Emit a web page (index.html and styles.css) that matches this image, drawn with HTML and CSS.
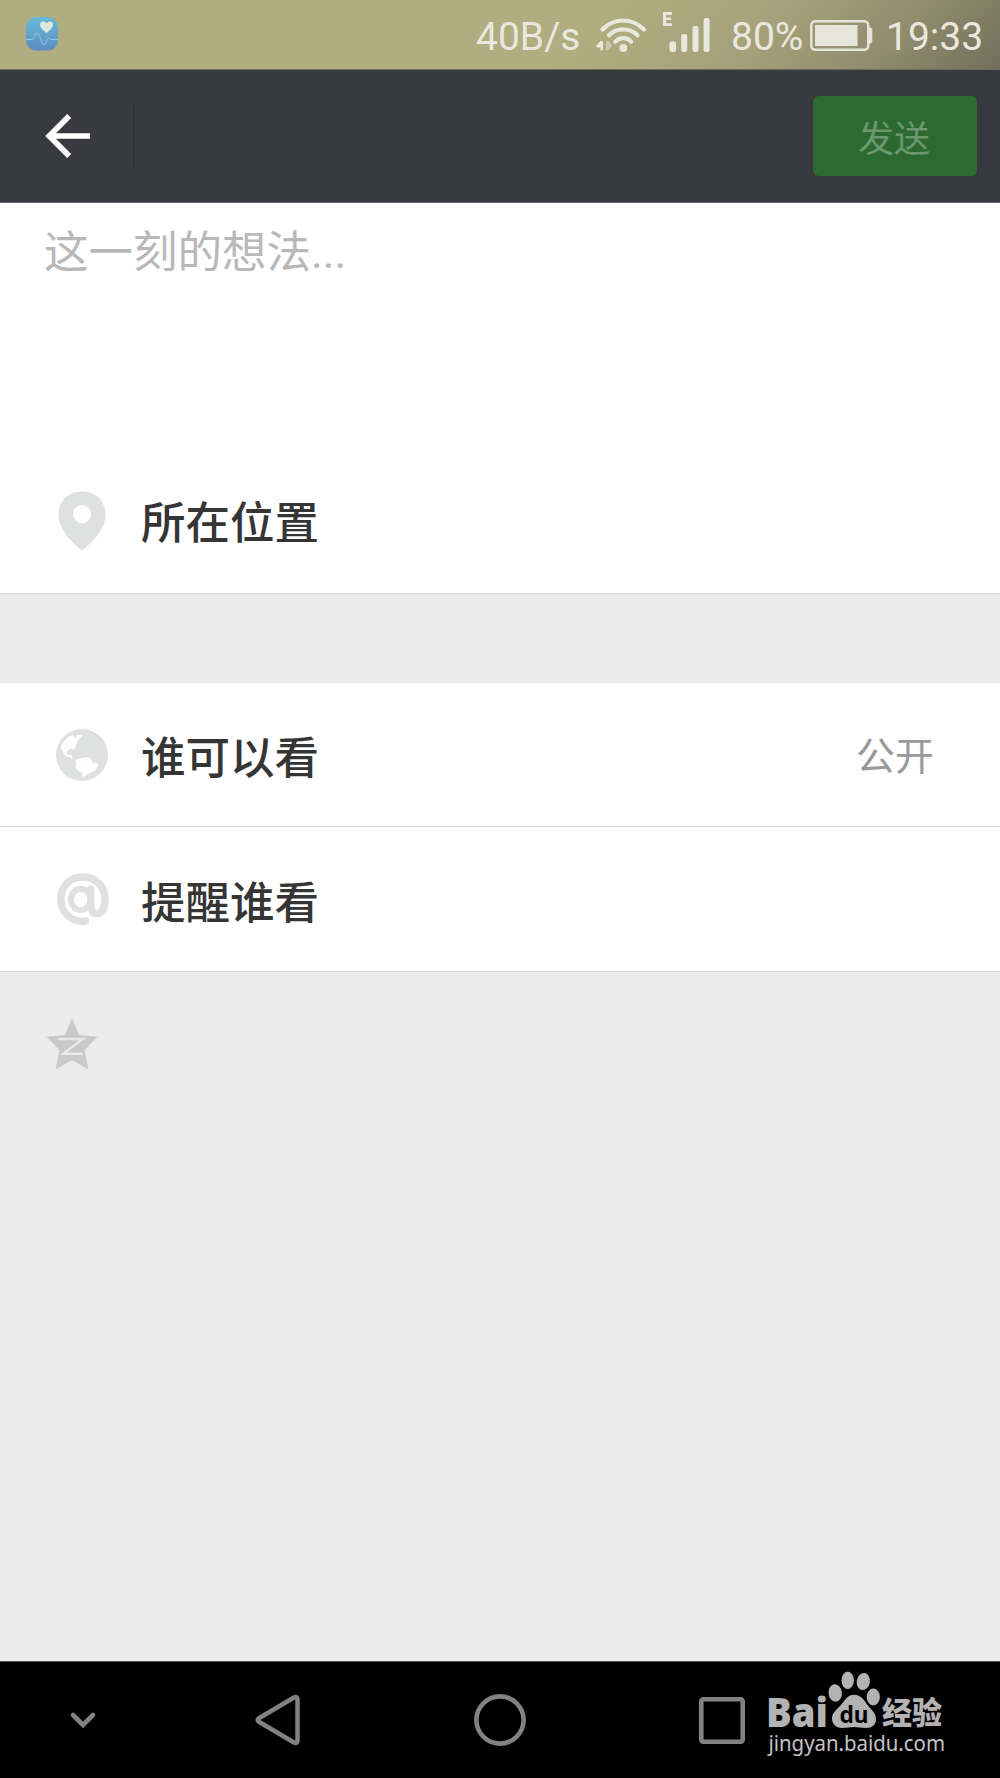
FILE: index.html
```
<!DOCTYPE html>
<html lang="zh-CN">
<head>
    <meta charset="UTF-8">
    <meta name="viewport" content="width=device-width, initial-scale=1.0">
    <title>朋友圈</title>
    <link rel="stylesheet" href="styles.css">
</head>
<body>
    <div class="status-bar">
        <svg class="health-icon" width="32" height="34" viewBox="0 0 32 34">
            <defs>
                <linearGradient id="health" x1="0" y1="0" x2="0" y2="1">
                    <stop offset="0" stop-color="#68b9d6"/>
                    <stop offset="1" stop-color="#5c8dc4"/>
                </linearGradient>
            </defs>
            <rect width="32" height="33.5" rx="10" fill="url(#health)"/>
            <path d="M20.5 16C16 12.500 14 10.500 14 7.800C14 4 18.500 3.500 20.500 6.200C22.500 3.500 27 4 27 7.800C27 10.500 25 12.500 20.500 16Z" fill="#dfe8dc"/>
            <path d="M0 22.500H6C8.500 22.500 8.500 16 11 16C14 16 15 27.500 18 27.500C20.500 27.500 21 21 23 21C24.500 21 24 23 26 22.500H32" fill="none" stroke="#9cc6dd" stroke-width="1"/>
        </svg>
        <span class="speed">40B/s</span>
        <svg class="wifi-icon" width="52" height="36" viewBox="0 0 52 36" fill="none" stroke="#e9e8dd" stroke-width="4.200" stroke-linecap="round">
            <path d="M6.500 13.500C18 1.500 36 1.500 48 13.500"/>
            <path d="M13 19.200C20.500 11.300 34 11.300 41.500 19.200"/>
            <path d="M19.300 25.700C23.500 21 31 21 35.200 25.700"/>
            <circle cx="27.300" cy="32" r="3.900" fill="#e9e8dd" stroke="none"/>
            <path d="M0 30L4.500 25H7V34.500H4.500V31.500H1Z" fill="#e9e8dd" stroke="none"/>
            <path d="M10 25H13L16 30L11.500 34.500H10Z" fill="#cbc8a9" stroke="none"/>
        </svg>
        <svg class="signal-icon" width="48" height="42" viewBox="0 0 48 42" fill="#e9e8dd">
            <path d="M0 0H9V2.800H3.200V5.500H8.300V8.100H3.200V11.200H9V14H0Z"/>
            <rect x="6.500" y="29.500" width="6.500" height="10.500" rx="2"/>
            <rect x="18.200" y="22" width="6" height="18" rx="2"/>
            <rect x="29.500" y="14" width="6" height="26" rx="2"/>
            <rect x="40.600" y="6" width="6" height="34" rx="2"/>
        </svg>
        <span class="percent">80%</span>
        <svg class="battery-icon" width="63" height="31" viewBox="0 0 63 31">
            <rect x="1.250" y="1.250" width="57" height="28.500" rx="4" fill="none" stroke="#e6e5dc" stroke-width="2.500"/>
            <rect x="5" y="5" width="42.500" height="21" fill="#e6e5dc"/>
            <path d="M59 7.500H60.500L62.300 9V22L60.500 23.500H59Z" fill="#e6e5dc"/>
        </svg>
        <span class="clock">19:33</span>
    </div>

    <div class="header">
        <svg class="back" width="46" height="46" viewBox="0 0 46 46" fill="none" stroke="#fff" stroke-width="5.600">
            <path d="M24.200 3L4.200 23L24.200 43M5 23H45"/>
        </svg>
        <span class="divider"></span>
        <button class="send-btn">发送</button>
    </div>

    <div class="compose">
        <p class="placeholder">这一刻的想法...</p>
        <div class="row row-location">
            <svg class="row-icon" width="52" height="60" viewBox="0 0 52 60">
                <path fill-rule="evenodd" fill="#dfe1e0" d="M26 59.500C20 54.500 2.500 41 2.500 23.500C2.500 10 12 0.500 26 0.500C40 0.500 49.500 10 49.500 23.500C49.500 41 32 54.500 26 59.500ZM26 14A9.100 9.100 0 1 0 26 32.200A9.100 9.100 0 1 0 26 14Z"/>
            </svg>
            <span class="label">所在位置</span>
        </div>
    </div>

    <div class="options">
        <div class="row">
            <svg class="row-icon" width="52" height="52" viewBox="0 0 52 52">
                <circle cx="26" cy="26" r="26" fill="#dfe1e0"/>
                <path fill="#fefefe" d="M5 17.500C8 11 12 7.500 17 6L19.500 10L20.500 6H27C23.500 9 20.500 13 19.500 18L18 20.500C15.500 19 11 20.500 11 23.500C11 26 13 26.500 16 25.500C15 27.500 17 28 16.500 30.500C13 27 9 28 7.500 24.500C7 22 5 20.500 5 17.500Z"/>
                <path fill="#fefefe" d="M20 30.500C24 30 29 27.500 33 28.500C35 29.500 35.500 32 37 33.500L42 34.500C42.500 40 39 42 34 44L26.500 48.500C26 46 27 44 25.500 43C20 41.500 18.500 39 20 36C21.500 34 18.500 32.500 20 30.500Z"/>
            </svg>
            <span class="label">谁可以看</span>
            <span class="value">公开</span>
        </div>
        <div class="row row-last">
            <svg class="row-icon" width="52" height="52" viewBox="0 0 52 52" fill="none" stroke="#dfe1e0" stroke-linecap="round">
                <path stroke-width="7.500" d="M29.500 48C15 50 4.800 39 4.800 26C4.800 13 14 4 27 4C40 4 49 13.500 49 26C49 35 46 40.700 41 40.700C37.500 40.700 35.500 38 35 33"/>
                <path stroke-width="7" d="M34.800 15.800V34"/>
                <ellipse cx="24.700" cy="26.500" rx="9.800" ry="10.600" stroke-width="6.200"/>
            </svg>
            <span class="label">提醒谁看</span>
        </div>
    </div>

    <div class="share">
        <svg width="52" height="52" viewBox="0 0 52 52">
            <path fill="#c9c9c9" d="M26 0L33 17L51.500 18.700L38.500 32L42.500 51.500L26 42L9.500 51.500L13.500 32L0.500 18.700L19 17Z"/>
            <path fill="none" stroke="#eaeaea" stroke-width="2.400" d="M12.500 21H37L17 35.800H37"/>
        </svg>
    </div>

    <div class="nav-bar">
        <svg width="26" height="18" viewBox="0 0 26 18" fill="none" stroke="#828282" stroke-width="4.600" stroke-linecap="round">
            <path d="M3 4L13 14L23 4"/>
        </svg>
        <svg width="46" height="52" viewBox="0 0 46 52" fill="none" stroke="#828282" stroke-width="4.500" stroke-linejoin="round">
            <path d="M3.500 24.500L39 3.500Q42.500 2 42.500 5.500V46.500Q42.500 50 39 48.500L3.500 27.500Q2 26 3.500 24.500Z"/>
        </svg>
        <svg width="52" height="52" viewBox="0 0 52 52" fill="none" stroke="#828282" stroke-width="4.600">
            <circle cx="26" cy="26" r="23.600"/>
        </svg>
        <svg width="46" height="47" viewBox="0 0 46 47" fill="none" stroke="#828282" stroke-width="4.600">
            <rect x="2.300" y="2.300" width="41.400" height="42.400" rx="2"/>
        </svg>
    </div>

    <!-- watermark -->
    <svg class="watermark" width="200" height="100" viewBox="0 0 200 100">
        <g fill="#b3b3b3">
            <text class="wm-brand" x="5" y="55.500" textLength="62" lengthAdjust="spacingAndGlyphs">Bai</text>
            <ellipse cx="74.200" cy="22" rx="6.700" ry="8.700" transform="rotate(-7 74 22)"/>
            <ellipse cx="86.700" cy="9.300" rx="6.200" ry="8.700"/>
            <ellipse cx="102.400" cy="10.500" rx="6.600" ry="8.600" transform="rotate(10 102 10)"/>
            <ellipse cx="112.300" cy="26" rx="6.600" ry="8.500"/>
            <path d="M93 23.700C100 23.700 103 29 106.500 34C110.500 39 115 42 115 48C115 54 111 57 105 57C100 57 97 56 93 56C89 56 86 57 81 57C75 57 71 53 71 47.500C71 42 75 39 79.500 34.500C83.500 30 86 23.700 93 23.700Z"/>
            <text class="wm-cn" x="121" y="52.500" textLength="60" lengthAdjust="spacingAndGlyphs">经验</text>
        </g>
        <text class="wm-du" x="78.500" y="51.500" textLength="29" lengthAdjust="spacingAndGlyphs">du</text>
        <text class="wm-url" x="7.500" y="79.500" textLength="176.500" lengthAdjust="spacingAndGlyphs">jingyan.baidu.com</text>
    </svg>
</body>
</html>
```
FILE: styles.css
```
* {
    box-sizing: border-box;
}
body {
    margin: 0;
    width: 1000px;
    height: 1778px;
    display: flex;
    flex-direction: column;
    position: relative;
    overflow: hidden;
    background: #ebebeb;
    font-family: Roboto, "Noto Sans CJK SC", sans-serif;
    color: #353535;
}
svg {
    display: block;
    flex-shrink: 0;
    overflow: visible;
}

/* status bar */
.status-bar {
    height: 70px;
    display: flex;
    align-items: flex-start;
    padding-left: 26px;
    background: linear-gradient(135deg, #b0ad80 58%, #a4a07a 75%, #8f8b6d 88%, #716f5b 100%);
    border-bottom: 1px solid #6d6b5a;
    font-size: 39px;
    line-height: 46px;
    color: #e9e8dd;
}
.health-icon {
    margin-top: 17px;
}
.speed {
    width: 120px;
    margin: 14px 0 0 418px;
}
.wifi-icon {
    margin-top: 16px;
}
.signal-icon {
    margin: 12px 0 0 15px;
}
.percent {
    width: 79px;
    margin: 14px 0 0 20px;
}
.battery-icon {
    margin-top: 20px;
}
.clock {
    margin: 14px 0 0 13px;
}

/* header */
.header {
    height: 133px;
    display: flex;
    align-items: center;
    padding: 0 23px 0 45px;
    background: #393a3f;
    border-bottom: 1px solid #66676b;
}
.divider {
    width: 2px;
    height: 66px;
    margin-left: 42px;
    background: #2e2f33;
}
.send-btn {
    width: 164px;
    height: 80px;
    margin-left: auto;
    padding: 0 2px 0 0;
    border: none;
    border-radius: 6px;
    background: #2d6a31;
    color: #6c976f;
    font-family: inherit;
    font-size: 36px;
}

/* form */
.compose {
    height: 391px;
    background: #fff;
    border-bottom: 1px solid #dcdcdc;
}
.placeholder {
    height: 246px;
    margin: 0;
    padding: 17px 0 0 44px;
    font-size: 44.500px;
    line-height: 66px;
    color: #b8b8b8;
}
.options {
    margin-top: 89px;
    background: #fff;
}
.row {
    height: 144px;
    display: flex;
    align-items: center;
    padding: 0 66px 0 56px;
    border-bottom: 1px solid #dcdcdc;
}
.row-location {
    border-bottom: none;
}
.row-last {
    height: 145px;
}
.label {
    margin-left: 33px;
    font-size: 44.500px;
    font-weight: 500;
}
.row-location .label {
    padding-bottom: 4px;
}
.value {
    margin-left: auto;
    padding-bottom: 4px;
    font-size: 39px;
    color: #999;
}
.share {
    flex: 1;
    padding: 46px 0 0 46px;
}

/* navigation */
.nav-bar {
    height: 117px;
    display: grid;
    grid-template-columns: 166px 223px 222px 222px;
    align-items: center;
    justify-items: center;
    background: #000;
    border-top: 1px solid #555;
}
.watermark {
    position: absolute;
    left: 761px;
    top: 1671px;
}
.wm-brand {
    font: 900 40px "Noto Sans", sans-serif;
}
.wm-cn {
    font: 900 31px "Noto Sans CJK SC", sans-serif;
}
.wm-du {
    font: 700 24px "Noto Sans", sans-serif;
    fill: #000;
}
.wm-url {
    font: 22px "Noto Sans", sans-serif;
    fill: #c4c4c4;
}
```
